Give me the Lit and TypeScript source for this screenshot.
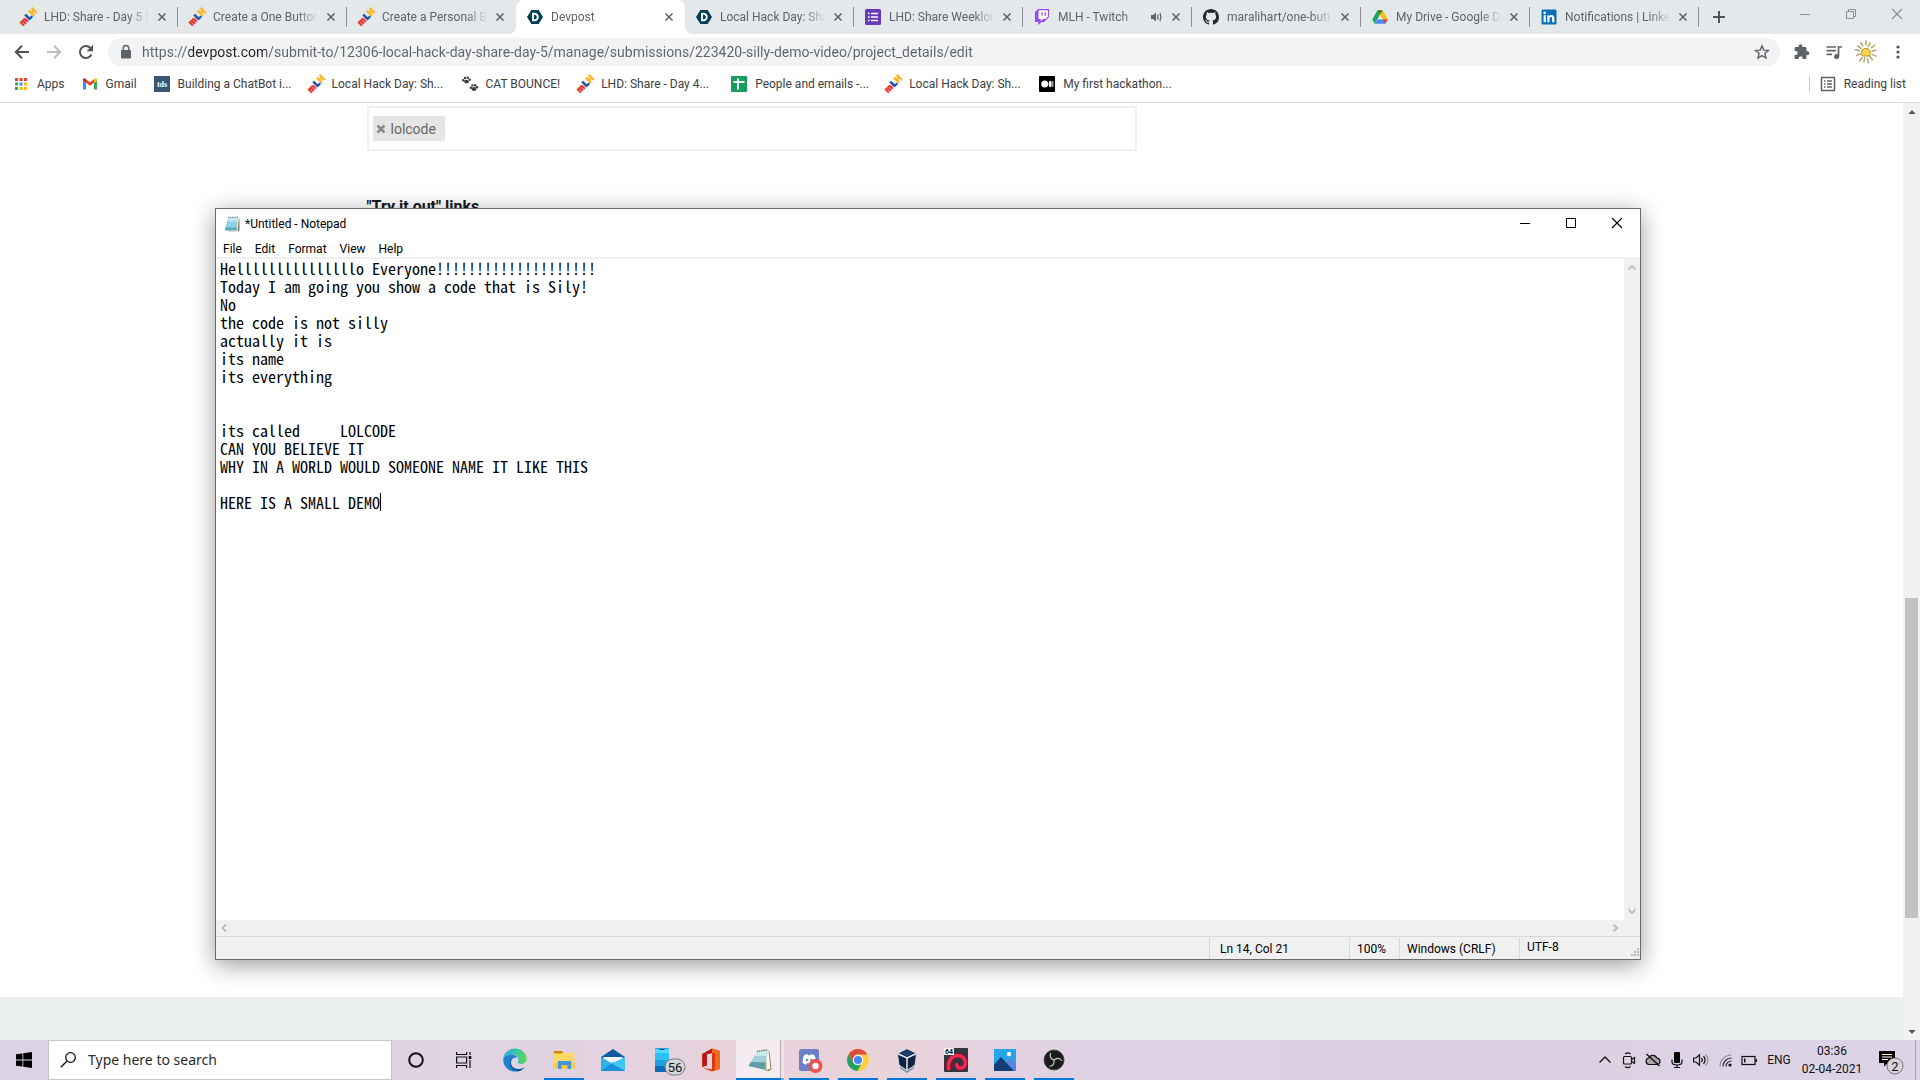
import { LitElement, html, css, svg, nothing, TemplateResult } from "lit";
import { customElement } from "lit/decorators.js";
import { classMap } from "lit/directives/class-map.js";

type Glyph = TemplateResult;

/* ---------- shared drawing helpers ---------- */

const icon = (body: unknown, size = 16, box = 16): Glyph =>
  html`<svg class="icon" width=${size} height=${size} viewBox="0 0 ${box} ${box}" aria-hidden="true">${body}</svg>`;

const mlh = () => icon(svg`
  <g transform="rotate(-45 8 8)" font-family="Roboto, sans-serif" font-weight="900" font-size="9">
    <text x="-2" y="11" fill="#e2362f" stroke="#e2362f" stroke-width=".6">m</text>
    <text x="6.500" y="11" fill="#1d539f" stroke="#1d539f" stroke-width=".8">L</text>
    <text x="12" y="11" fill="#f8b92a" stroke="#f8b92a" stroke-width=".8">H</text>
  </g>`);

const devpost = () => icon(svg`
  <path fill="#003e54" d="M4.400 1h7.200L16 8l-4.400 7H4.400L0 8z"/>
  <path fill="none" stroke="#fff" stroke-width="1.900" d="M6 4.800v6.400h1.600a3.200 3.200 0 0 0 0-6.400z"/>`);

const forms = () => icon(svg`
  <rect width="16" height="16" rx="1.500" fill="#673ab7"/>
  <path stroke="#fff" stroke-width="1.500" d="M3 4.500h1.600M3 8h1.600M3 11.500h1.600M6 4.500h7M6 8h7M6 11.500h7"/>`);

const twitch = () => icon(svg`
  <path fill="#9146ff" d="M4 0 1 3v10h3.500v3l3-3H10l5-5V0z"/>
  <path fill="#fff" d="M4.500 1.200h9.400v6.300L11.500 10H9l-2.200 2.200V10H4.500z"/>
  <path fill="#9146ff" d="M7.400 3.200h1.200v3.500H7.400zM10.600 3.200h1.200v3.500h-1.200z"/>`);

const github = () => icon(svg`
  <path fill="#24292e" d="M8 0C3.580 0 0 3.580 0 8c0 3.540 2.290 6.530 5.470 7.590.4.070.55-.17.55-.38 0-.19-.01-.82-.01-1.490-2.010.37-2.530-.49-2.690-.94-.09-.23-.48-.94-.82-1.130-.28-.15-.68-.52-.01-.53.63-.01 1.080.58 1.230.82.72 1.210 1.870.87 2.330.66.07-.52.28-.87.51-1.070-1.780-.2-3.640-.89-3.640-3.950 0-.87.31-1.590.82-2.150-.08-.2-.36-1.020.08-2.120 0 0 .67-.21 2.200.82.64-.18 1.320-.27 2-.27s1.360.09 2 .27c1.530-1.040 2.200-.82 2.200-.82.44 1.100.16 1.920.08 2.120.51.56.82 1.270.82 2.150 0 3.070-1.870 3.750-3.650 3.950.29.25.54.73.54 1.480 0 1.070-.01 1.930-.01 2.200 0 .21.15.46.55.38A8.010 8.010 0 0 0 16 8c0-4.420-3.580-8-8-8z"/>`);

const drive = () => icon(svg`
  <path fill="#1fa463" d="M5.500 1.300 8 5.600 2.700 14.700.2 10.400z"/>
  <path fill="#ffba00" d="M5.500 1.300h5l5.300 9.100h-5z"/>
  <path fill="#4688f4" d="M5.300 10.400h10.500l-2.500 4.300H2.700z"/>
  <path fill="#ea4335" d="m10.800 10.400 5 0-2.500 4.300z"/>
  <path fill="#188038" d="M5.500 1.300h5L8 5.600z"/>`);

const linkedin = () => icon(svg`
  <rect x=".5" y=".5" width="15" height="15" rx="1.200" fill="#0a6fb4"/>
  <rect x="2.600" y="6.300" width="2.200" height="6.900" fill="#fff"/><circle cx="3.700" cy="3.900" r="1.300" fill="#fff"/>
  <path fill="#fff" d="M6.300 6.300h2.100v1c.4-.7 1.200-1.200 2.200-1.200 2.100 0 2.700 1.400 2.700 3.300v3.800h-2.200V9.800c0-.9-.1-1.900-1.200-1.900-1.200 0-1.400.9-1.400 1.800v3.500H6.300z"/>`);

const apps = () => icon(svg`
  ${[["#ea4335", 2, 2], ["#ea4335", 6.500, 2], ["#ea4335", 11, 2], ["#34a853", 2, 6.500], ["#4285f4", 6.500, 6.500], ["#fbbc04", 11, 6.500],
    ["#34a853", 2, 11], ["#fbbc04", 6.500, 11], ["#fbbc04", 11, 11]].map(
    ([c, x, y]) => svg`<rect x=${x} y=${y} width="3" height="3" fill=${c}/>`)}`);

const gmail = () => icon(svg`
  <path fill="#4285f4" d="M1 13.500V4.500l3 2.300v6.700z"/><path fill="#34a853" d="M12 13.500V6.800l3-2.300v9z"/>
  <path fill="#fbbc04" d="M12 3.200v3.600l3-2.300v-.8c0-1.200-1.300-1.800-2.200-1.100z"/>
  <path fill="#c5221f" d="M1 4.500v-.8c0-1.200 1.300-1.800 2.200-1.100l.8.600v3.600z"/>
  <path fill="#ea4335" d="M4 3.200 8 6.200l4-3v3.600L8 9.800l-4-3z"/>`);

const tds = () => icon(svg`
  <rect width="16" height="16" fill="#355876"/>
  <text x="8" y="11" text-anchor="middle" font-family="Liberation Serif, serif" font-weight="700" font-size="8" fill="#fff">tds</text>`);

const paws = () => icon(svg`
  <g fill="#3d3d3d"><ellipse cx="4.500" cy="5.600" rx="2.400" ry="1.900"/><circle cx="1.300" cy="4.200" r="1.200"/><circle cx="3" cy="1.900" r="1.200"/><circle cx="5.700" cy="1.700" r="1.200"/><circle cx="7.700" cy="3.700" r="1.200"/>
  <ellipse cx="12" cy="13" rx="2.400" ry="1.900"/><circle cx="8.900" cy="11.800" r="1.200"/><circle cx="10.500" cy="9.400" r="1.200"/><circle cx="13.200" cy="9.200" r="1.200"/><circle cx="15" cy="11.300" r="1.200"/></g>`);

const sheets = () => icon(svg`
  <rect width="16" height="16" rx="1" fill="#12a05c"/><path stroke="#fff" stroke-width="1.800" d="M2.500 6h11M7 2.500v11"/>`);

const medium = () => icon(svg`
  <rect width="16" height="16" rx="1" fill="#000"/><circle cx="5.700" cy="8" r="3.500" fill="#fff"/>
  <ellipse cx="11.200" cy="8" rx="1.500" ry="3.300" fill="#fff"/><rect x="13.400" y="5" width=".9" height="6" fill="#fff"/>`);

const cross = (s = 16) => icon(svg`<path stroke="currentColor" stroke-width="1.600" fill="none" d="m4.500 4.500 7 7m0-7-7 7"/>`, s);
const speaker = () => icon(svg`<path fill="#5f6368" d="M3 6v4h2.200L8 12.500v-9L5.200 6z"/><path fill="none" stroke="#5f6368" stroke-width="1.300" d="M9.800 5.500v5M12 4c1 2.400 1 5.600 0 8"/>`);

const winMin = () => icon(svg`<path stroke="currentColor" d="M3 8.500h10"/>`);
const winMax = () => icon(svg`<path stroke="currentColor" fill="none" d="M3.500 3.500h9v9h-9z"/>`);
const winRestore = () => icon(svg`<path stroke="currentColor" fill="none" d="M3.500 5.500h7v7h-7zM5.500 5.500v-2h7v7h-2"/>`);
const winClose = () => icon(svg`<path stroke="currentColor" stroke-width="1.100" d="m3 3 10 10m0-10L3 13"/>`);

const chevron = (d: string) => icon(svg`<path fill="none" stroke="#bcbcbc" stroke-width="1.800" d=${d}/>`);
const triangle = (d: string) => icon(svg`<path fill="#505050" d=${d}/>`);

const notepadIcon = (size: number) => icon(svg`
  <path fill="#8a7a55" d="M8 30.500h20l3-2V5h-3z"/>
  <path fill="#f6f3ea" d="M6 29 27 30 30 4H11z"/>
  <path fill="#8fd0e2" d="M8 3h20.500L25 28.500H1.500z"/>
  <path fill="#bfe9f4" d="M8 3h20.500l-1 8H6z"/><path fill="#5ba9c0" d="M2.800 23h22.900L25 28.500H1.500z"/>
  <path stroke="#68747a" stroke-width="2.200" stroke-dasharray="2 1.500" d="M8.500 2.500h20"/>`, size, 32);

const notepadTask = () => icon(svg`
  <path fill="#8a7a55" d="m17 22.500 4 .5 2.500-2-2-17.500-1.500-1z"/>
  <path fill="#faf7ee" d="m18 3 2.500-.5 2 18-4 2z"/>
  <path fill="#9fd2d8" d="M9 3.500 20 2l-3.500 19.500L.5 18z"/><path fill="#c8e8ea" d="M9 3.500 20 2l-1.200 6L6.500 8z"/>
  <path fill="#5d9ba5" d="m3 14 15 .5-1.500 7L.5 18z"/><path stroke="#5f6b70" stroke-width="1.400" stroke-dasharray="1.200 1" d="m9 3.300 11-1.500"/>`, 24, 24);

/* ---------- page data ---------- */

interface TabItem { title: string; art: () => Glyph; active?: boolean; audio?: boolean; plain?: boolean }

const TABS: TabItem[] = [
  { title: "LHD: Share - Day 5 |", art: mlh },
  { title: "Create a One Button", art: mlh },
  { title: "Create a Personal Bl", art: mlh, plain: true },
  { title: "Devpost", art: devpost, active: true, plain: true },
  { title: "Local Hack Day: Sha", art: devpost },
  { title: "LHD: Share Weeklon", art: forms },
  { title: "MLH - Twitch", art: twitch, audio: true },
  { title: "maralihart/one-butt", art: github },
  { title: "My Drive - Google D", art: drive },
  { title: "Notifications | Linke", art: linkedin },
];

const BOOKMARKS: { title: string; art: () => Glyph; wide?: boolean }[] = [
  { title: "Apps", art: apps },
  { title: "Gmail", art: gmail },
  { title: "Building a ChatBot i...", art: tds, wide: true },
  { title: "Local Hack Day: Sh...", art: mlh, wide: true },
  { title: "CAT BOUNCE!", art: paws },
  { title: "LHD: Share - Day 4...", art: mlh, wide: true },
  { title: "People and emails -...", art: sheets, wide: true },
  { title: "Local Hack Day: Sh...", art: mlh, wide: true },
  { title: "My first hackathon...", art: medium, wide: true },
];

const NOTE = `Helllllllllllllllo Everyone!!!!!!!!!!!!!!!!!!!!
Today I am going you show a code that is Sily!
No
the code is not silly
actually it is
its name
its everything


its called     LOLCODE
CAN YOU BELIEVE IT
WHY IN A WORLD WOULD SOMEONE NAME IT LIKE THIS

HERE IS A SMALL DEMO`;

const URL_TEXT = "https://devpost.com/submit-to/12306-local-hack-day-share-day-5/manage/submissions/223420-silly-demo-video/project_details/edit";

const reset = css`
  * { box-sizing: border-box; }
  button, input, textarea { font: inherit; color: inherit; border: 0; padding: 0; margin: 0; background: none; outline: 0; border-radius: 0; }
  button { display: flex; align-items: center; justify-content: center; }
  a { color: inherit; text-decoration: none; }
  .icon { display: block; flex: none; overflow: visible; }
`;

/* ---------- browser chrome ---------- */

@customElement("browser-chrome")
export class BrowserChrome extends LitElement {
  static styles = [reset, css`
    :host { display: block; font: 12px/16px Roboto, "Noto Sans", sans-serif; color: #5f6368; background: #fff; border-bottom: 1px solid #d9dbde; }
    .strip { display: flex; height: 34px; padding-left: 9px; background: #e4e8eb; }
    .tab { position: relative; flex: 0 1 169px; min-width: 0; display: flex; align-items: center; padding: 0 8px 0 11px; }
    .tab::after { content: ""; position: absolute; right: 0; top: 7px; width: 1px; height: 20px; background: #8c9095; }
    .tab.plain::after { display: none; }
    .tab.active { background: #fff; border-radius: 8px 8px 0 0; }
    .tab.active::before { content: ""; position: absolute; left: -8px; right: -8px; bottom: 0; height: 8px;
      background: radial-gradient(circle at 0 0, transparent 8px, #fff 8px) left / 8px 8px no-repeat,
                  radial-gradient(circle at 100% 0, transparent 8px, #fff 8px) right / 8px 8px no-repeat; }
    .title { flex: 1; min-width: 0; margin-left: 8px; justify-content: flex-start; overflow: hidden; white-space: nowrap;
      -webkit-mask-image: linear-gradient(to left, transparent 4px, #000 26px); mask-image: linear-gradient(to left, transparent 4px, #000 26px); }
    .audio { margin-right: 4px; }
    .newtab { width: 40px; }
    .controls { display: flex; margin-left: auto; height: 28px; color: #8a8d91; }
    .controls button { width: 46px; }
    .toolbar { display: flex; align-items: center; gap: 4px; height: 36px; padding: 0 8px; }
    .tool { width: 28px; height: 28px; }
    .omnibox { flex: 1; min-width: 0; display: flex; align-items: center; gap: 8px; height: 28px; margin: 0 4px; padding: 0 10px; border-radius: 14px; background: #f1f3f4; }
    .url { flex: 1; min-width: 0; height: 20px; font-size: 14px; color: transparent; caret-color: #202124;
      background: linear-gradient(to right, #5f6368 47px, #202124 47px 124px, #5f6368 124px);
      -webkit-background-clip: text; background-clip: text; }
    .marks { display: flex; align-items: center; height: 32px; padding: 0 14px 4px 13px; color: #3c4043; }
    .mark { display: flex; align-items: center; gap: 8px; padding-right: 17px; white-space: nowrap; }
    .mark.wide { width: 154px; padding-right: 0; }
    .reading { gap: 8px; margin-left: auto; padding-left: 10px; border-left: 1px solid #c8cacd; }
  `];

  render() {
    return html`
      <div class="strip">
        ${TABS.map(t => html`
          <div class=${classMap({ tab: true, active: !!t.active, plain: !!t.plain })}>
            ${t.art()}
            <button class="title">${t.title}</button>
            ${t.audio ? html`<button class="audio" aria-label="Mute tab">${speaker()}</button>` : nothing}
            <button aria-label="Close tab">${cross()}</button>
          </div>`)}
        <button class="newtab" aria-label="New tab">${icon(svg`<path stroke="#505458" stroke-width="2" d="M8 2v12M2 8h12"/>`)}</button>
        <div class="controls">
          <button aria-label="Minimize">${winMin()}</button>
          <button aria-label="Restore">${winRestore()}</button>
          <button aria-label="Close">${winClose()}</button>
        </div>
      </div>
      <div class="toolbar">
        <button class="tool" aria-label="Back">${icon(svg`<path fill="none" stroke="#505458" stroke-width="2" d="M15 8H2.500M8 1.800 1.800 8 8 14.200"/>`)}</button>
        <button class="tool" aria-label="Forward">${icon(svg`<path fill="none" stroke="#babcbe" stroke-width="2" d="M1 8h12.500M8 1.800 14.200 8 8 14.200"/>`)}</button>
        <button class="tool" aria-label="Reload">${icon(svg`<path fill="none" stroke="#505458" stroke-width="2" d="M13.400 10.500A6 6 0 1 1 12.400 4"/><path fill="#505458" d="M15 .8v6.400H8.600z"/>`)}</button>
        <div class="omnibox">
          ${icon(svg`<rect x="3" y="6" width="10" height="8.500" rx="1" fill="#5f6368"/><path fill="none" stroke="#5f6368" stroke-width="1.500" d="M5.300 6V4.300a2.700 2.700 0 0 1 5.400 0V6"/>`)}
          <input class="url" type="text" aria-label="Address" .value=${URL_TEXT}>
          <button aria-label="Bookmark this page">${icon(svg`<path fill="none" stroke="#5f6368" stroke-width="1.400" d="m8 1.800 1.800 4.300 4.600.4-3.500 3 1.100 4.500-4-2.400-4 2.400 1.100-4.500-3.500-3 4.600-.4z"/>`)}</button>
        </div>
        <button class="tool" aria-label="Extensions">${icon(svg`<path fill="#5f6368" d="M13.500 7.300h-1V4.500c0-.8-.6-1.400-1.400-1.400H8.400V2.200a1.900 1.900 0 0 0-3.800 0v.9H2C1.200 3.100.6 3.700.6 4.500v2.600h1a2 2 0 0 1 0 4h-1v2.600c0 .8.600 1.400 1.400 1.400h2.700v-1a1.900 1.900 0 0 1 3.900 0v1h2.500c.8 0 1.400-.6 1.400-1.400V11h1a1.850 1.850 0 0 0 0-3.700z"/>`)}</button>
        <button class="tool" aria-label="Media controls">${icon(svg`<path stroke="#5f6368" stroke-width="1.700" d="M.5 3h9.500M.5 6.700h9.500M.5 10.400h5.500"/><path fill="none" stroke="#5f6368" stroke-width="1.700" d="M12.500 12.500V3H16"/><circle cx="10.600" cy="12.400" r="2.500" fill="#5f6368"/>`)}</button>
        <button class="tool" aria-label="Profile">${icon(svg`
          <g stroke="#b5a468" stroke-width="1.500" stroke-linecap="round">${[0, 24, 52, 80, 112, 140, 168, 192, 215, 250, 282, 306, 332].map((a, i) => svg`<path d=${i % 2 ? "M12 2v4" : "M12 1v4"} transform="rotate(${a} 12 12)"/>`)}</g>
          <path fill="#f8d84c" stroke="#b98f2b" d="M8 10 11 8.300l3.700.7 1.800 3-.8 4H8.500L7.500 14z"/>`, 24, 24)}</button>
        <button class="tool" aria-label="Menu">${icon(svg`<g fill="#505458"><circle cx="8" cy="3" r="1.600"/><circle cx="8" cy="8" r="1.600"/><circle cx="8" cy="13" r="1.600"/></g>`)}</button>
      </div>
      <nav class="marks" aria-label="Bookmarks">
        ${BOOKMARKS.map(b => html`<a class=${classMap({ mark: true, wide: !!b.wide })} href="#">${b.art()}<span>${b.title}</span></a>`)}
        <button class="reading">${icon(svg`<rect x="1.500" y="1.500" width="13" height="13" fill="none" stroke="#5f6368" stroke-width="1.500"/><path stroke="#5f6368" stroke-width="1.300" d="M4 5h1.500M4 8h1.500M4 11h1.500M7 5h5M7 8h5M7 11h5"/>`)}<span>Reading list</span></button>
      </nav>`;
  }
}

/* ---------- page under the window ---------- */

@customElement("submission-page")
export class SubmissionPage extends LitElement {
  static styles = [reset, css`
    :host { display: flex; min-height: 0; background: #fff; }
    .page { flex: 1; min-width: 0; display: flex; flex-direction: column; justify-content: space-between; }
    .column { width: 100%; max-width: 1170px; margin: 0 auto; padding-top: 3px; font: 14px/20px Roboto, "Open Sans", sans-serif; color: #666; }
    .tags { display: flex; max-width: 770px; height: 45px; padding: 8px 4px; border: 2px solid #ecf0f1; }
    .tag { display: flex; align-items: center; gap: 6px; padding: 0 9px 0 4px; background: #e5e5e5; }
    .heading { display: block; margin-top: 46px; font: 700 16px/20px Roboto, sans-serif; color: #17191a; }
    .footer { height: 43px; background: #ecf0f1; }
    .scroll { display: flex; flex-direction: column; align-items: stretch; width: 17px; background: #f1f1f1; }
    .scroll button { height: 17px; }
    .before { flex: 478; }
    .thumb { flex: 320; margin: 0 2px; background: #c1c1c1; }
    .after { flex: 105; }
  `];

  render() {
    return html`
      <div class="page">
        <div class="column">
          <div class="tags">
            <span class="tag"><button aria-label="Remove lolcode">${icon(svg`<path stroke="#888" stroke-width="2.500" d="m.5 .5 7 7m0-7-7 7"/>`, 8, 8)}</button>lolcode</span>
          </div>
          <strong class="heading">"Try it out" links</strong>
        </div>
        <div class="footer"></div>
      </div>
      <div class="scroll">
        <button aria-label="Scroll up">${triangle("M4.500 10h7L8 6z")}</button>
        <div class="before"></div><div class="thumb"></div><div class="after"></div>
        <button aria-label="Scroll down">${triangle("M4.500 6h7L8 10z")}</button>
      </div>`;
  }
}

/* ---------- notepad window ---------- */

@customElement("notepad-window")
export class NotepadWindow extends LitElement {
  static styles = [reset, css`
    :host { display: flex; flex-direction: column; font: 12px/16px Roboto, "Noto Sans", sans-serif; color: #000; background: #fff;
      border: 1px solid #6b6b6b; box-shadow: 0 5px 22px rgba(0, 0, 0, .4); }
    .titlebar { display: flex; align-items: center; height: 30px; padding-left: 8px; gap: 5px; }
    .controls { display: flex; align-self: flex-start; margin-left: auto; height: 28px; }
    .controls button { width: 46px; }
    .menu { display: flex; height: 20px; padding: 2px 1px 0; border-bottom: 2px solid #f0f0f0; }
    .menu button { padding: 0 6px; }
    .menu button + button { padding-left: 7px; }
    .body { flex: 1; min-height: 0; display: grid; grid-template: minmax(0, 1fr) 16px / minmax(0, 1fr) 16px; background: #f0f0f0; }
    .sheet { position: relative; background: #fff; font: 16px/18px "Noto Sans Mono CJK SC", "DejaVu Sans Mono", monospace; }
    .text { display: block; width: 100%; height: 100%; padding: 0 4px; resize: none; overflow: hidden; white-space: pre; }
    .caret { position: absolute; left: calc(4px + 20ch); top: calc(13 * 18px); width: 1px; height: 18px; background: #000; }
    .vbar { display: flex; flex-direction: column; justify-content: space-between; }
    .hbar { display: flex; justify-content: space-between; }
    .status { display: grid; grid-template-columns: minmax(0, 1fr) 140px 50px 120px 121px; align-items: stretch; height: 23px; padding-top: 1px; line-height: 23px; background: #f0f0f0; border-top: 1px solid #d7d7d7; }
    .status span { height: 21px; padding-left: 7px; white-space: nowrap; border-left: 1px solid #d7d7d7; }
    .status span:first-child { border-left: 0; }
    .status .place { padding-left: 10px; }
    .status .last { display: flex; justify-content: space-between; align-items: flex-end; }
  `];

  render() {
    return html`
      <div class="titlebar">
        ${notepadIcon(16)}<span>*Untitled - Notepad</span>
        <div class="controls">
          <button aria-label="Minimize">${winMin()}</button>
          <button aria-label="Maximize">${winMax()}</button>
          <button aria-label="Close">${winClose()}</button>
        </div>
      </div>
      <div class="menu">${["File", "Edit", "Format", "View", "Help"].map(m => html`<button>${m}</button>`)}</div>
      <div class="body">
        <div class="sheet">
          <textarea class="text" aria-label="Text editor" spellcheck="false" .value=${NOTE}></textarea>
          <i class="caret"></i>
        </div>
        <div class="vbar">
          <button aria-label="Scroll up">${chevron("m4.500 10.500 3.500-3.500 3.500 3.500")}</button>
          <button aria-label="Scroll down">${chevron("m4.500 5.500 3.500 3.500 3.500-3.500")}</button>
        </div>
        <div class="hbar">
          <button aria-label="Scroll left">${chevron("M10 4.500 6.500 8l3.500 3.500")}</button>
          <button aria-label="Scroll right">${chevron("M5.500 4.500 9 8l-3.500 3.500")}</button>
        </div>
        <div></div>
      </div>
      <div class="status">
        <span></span><span class="place">Ln 14, Col 21</span><span>100%</span><span>Windows (CRLF)</span>
        <span class="last">UTF-8 ${icon(svg`<path fill="#b8b8b8" d="M9 1h2v2H9zM6 4h2v2H6zM9 4h2v2H9zM3 7h2v2H3zM6 7h2v2H6zM9 7h2v2H9z"/>`, 12, 12)}</span>
      </div>`;
  }
}

/* ---------- taskbar ---------- */

const edge = () => icon(svg`
  <defs><linearGradient id="e1" x1="0" y1="0" x2="1" y2="0"><stop offset="0" stop-color="#2aa7dc"/><stop offset=".6" stop-color="#3cc9a4"/><stop offset="1" stop-color="#62d84e"/></linearGradient></defs>
  <path fill="url(#e1)" d="M.3 10.500C1 4.500 6 .5 12 .5c7 0 11.700 5 11.700 10.200 0 3.300-2.600 5.300-5.500 5.300-2.600 0-3.700-1-3.700-1.700s.8-.9.800-2.800C15.300 8.500 12.500 6.600 9 6.600c-4 0-7.300 1.700-8.700 3.900z"/>
  <path fill="#1b82d2" d="M.3 10.500C1.500 8.100 4.600 6.600 8 6.600c3 0 5.200 1.100 6.500 3-4-.5-6.500 1.900-6.500 5.200 0 4.300 3.400 7.900 8 8.100-1.200.4-2.600.6-4 .6C5 23.500-.4 17.500.3 10.500z"/>
  <path fill="#10539f" d="M9.800 10.600c-2.300 1.700-2.600 5-.9 7.300 2.500 3.500 8.300 4.200 12.800 1-1.500 2.500-4 4.100-6.700 4.400-4.500-.3-8-3.700-8-8.200 0-2 1-3.700 2.800-4.500z"/>`, 24, 24);
const folder = () => icon(svg`
  <path fill="#d99a17" d="M2 3h8l1.500 2H2z"/><path fill="#ffd767" d="M1.500 5h21v15.500h-21z"/><path fill="#f9c63d" d="M1.500 15h21v5.500h-21z"/><path fill="#c78b0c" d="M2 3h8v2.500H2z"/>
  <path fill="#3f97d8" d="M6 13h13v8h-3.500v-4h-6v4H6z"/>`, 24, 24);
const mail = () => icon(svg`
  <path fill="#0e5ba5" d="M0 9 12 1l12 8v5H0z"/><path fill="#f4f8fc" d="M2.500 9h19v4L12 19 2.500 13z"/>
  <path fill="#2fb4ea" d="M0 9v14h24V9L12 16z"/><path fill="#1790dd" d="M0 23 12 14l12 9z"/><path fill="#42c6f5" d="M24 9v14L10.500 15.500z"/>`, 24, 24);
const phone = () => icon(svg`
  <rect x="5" width="14" height="24" rx="1" fill="#1fa0e2"/><path fill="#4fdcff" d="M5 1h14v4H5z"/><path fill="#2cc0f3" d="M5 5h14v7H5z"/><path fill="#1268b5" d="M5 18h14v6H5z"/><path stroke="#0c3c66" d="M9.500 1.500h5"/>
  <rect x="15" y="11" width="20" height="16" rx="8" fill="#d3d6da" stroke="#777b80"/>
  <text x="25" y="24" text-anchor="middle" font-family="Roboto, sans-serif" font-size="13" fill="#111">56</text>`, 24, 24);
const office = () => icon(svg`
  <path fill="#dd3a12" d="M13 .5 21 3v18l-8 2.500L4 20l9 1.200V5L8 6.300v11.200L3.300 19V6z"/><path fill="#f26b1d" d="M13 .5 21 3v18l-5 1.500V4.500L13 5z"/><path fill="#b21d1a" d="M13 .5 3.300 6v13L8 17.500V6.300L13 5z"/>`, 24, 24);
const discord = () => icon(svg`
  <g transform="translate(2 1)"><rect x="0" y="0" width="20" height="22" rx="2.500" fill="#6c7fc4"/>
  <path fill="#fff" d="M3.500 14c0-4 1-7 2-8l3-.9.7 1.100h2.100L12 5.100l3 .9c1 1 2 4 2 8l-3.200 1.700-1-1.500H8l-1 1.500z"/><circle cx="8" cy="11" r="1.300" fill="#6c7fc4"/><circle cx="12.500" cy="11" r="1.300" fill="#6c7fc4"/>
  <circle cx="16.500" cy="17" r="7" fill="#f05050"/><circle cx="16.500" cy="17" r="3.200" fill="#fff"/></g>`, 24, 24);
const chrome = () => icon(svg`
  <circle cx="12" cy="12" r="11" fill="#ffcd42"/>
  <path fill="#dc4b3e" d="M2.500 6.500A11 11 0 0 1 21.500 6.500H12A5.500 5.500 0 0 0 7 9.700z"/><path fill="#dc4b3e" d="M2.500 6.500 7.300 14.800 8 8z"/>
  <path fill="#1ea362" d="M2.500 6.500A11 11 0 0 0 11.500 23l4.700-8.200a5.500 5.500 0 0 1-9 0z"/>
  <circle cx="12" cy="12" r="5.200" fill="#fff"/><circle cx="12" cy="12" r="4.100" fill="#4587f4"/>`, 24, 24);
const vbox = () => icon(svg`
  <path fill="#8d99a8" d="m5 18 7 5 7-5v2.500l-7 4.500-7-4.500z"/><path fill="#10243f" stroke="#d9e3ee" stroke-width=".8" d="M12 .8 21.500 5.500 20 17l-8 5.500L4 17 2.500 5.500z"/>
  <path fill="none" stroke="#e8eff6" stroke-width="1.500" d="M3 5.700 12 10l9-4.300M12 10v12"/><path fill="#1d3f6b" d="M6 5.500 12 2.500l6 3-6 2.700z"/>`, 24, 24);
const debian = () => icon(svg`
  <rect width="24" height="24" rx="1" fill="#34363e"/>
  <path fill="none" stroke="#8f0d2e" stroke-width="5" d="M5 22c-2-7 2-14.500 8.500-14.500 5 0 8 3.500 8 7.300 0 3.600-3 5.800-6 5.200-2.600-.5-3.600-3-2-4.700"/>
  <path fill="none" stroke="#ee2c54" stroke-width="3.400" d="M5 22c-2-7 2-14.500 8.500-14.500 5 0 8 3.500 8 7.300 0 3.600-3 5.800-6 5.200-2.600-.5-3.600-3-2-4.700"/>
  <rect x="0" y="0" width="10" height="7" fill="#f5f5f5"/><text x="5" y="6" text-anchor="middle" font-family="Roboto, sans-serif" font-weight="700" font-size="7" fill="#111">64</text>`, 24, 24);
const photos = () => icon(svg`
  <rect x="1" y="1" width="22" height="22" fill="#27a5ea"/><path fill="#5784dc" d="M12 15l5-5 6 6v7H12z"/><path fill="#123d78" d="M1 16.500 8 9l13 14H1z"/><circle cx="16" cy="6" r="2.200" fill="#fff"/>`, 24, 24);
const obs = () => icon(svg`
  <circle cx="12" cy="12" r="10" fill="#1b1a1d" stroke="#4a494d"/>
  <g fill="none" stroke="#c9c8cb" stroke-width="1.200">${[0, 120, 240].map(a => svg`<path d="M12 12C8.500 11 7.200 8 8.800 5" transform="rotate(${a} 12 12)"/>`)}</g>`, 24, 24);

const TASKS: { name: string; art: () => Glyph; open?: boolean; current?: boolean }[] = [
  { name: "Microsoft Edge", art: edge },
  { name: "File Explorer", art: folder, open: true },
  { name: "Mail", art: mail },
  { name: "Your Phone", art: phone },
  { name: "Office", art: office },
  { name: "Notepad", art: notepadTask, open: true, current: true },
  { name: "Discord", art: discord, open: true },
  { name: "Google Chrome", art: chrome, open: true },
  { name: "VirtualBox", art: vbox, open: true },
  { name: "Debian", art: debian, open: true },
  { name: "Photos", art: photos, open: true },
  { name: "OBS Studio", art: obs, open: true },
];

const TRAY: { name: string; art: Glyph }[] = [
  { name: "Show hidden icons", art: icon(svg`<path fill="none" stroke="#111" stroke-width="1.300" d="m2.500 10.500 5.500-5.500 5.500 5.500"/>`) },
  { name: "Meet Now", art: icon(svg`<g fill="none" stroke="#111" stroke-width="1.200"><rect x="2.500" y="4.500" width="8" height="7.500" rx="1"/><path d="m10.500 7.500 3-2v6l-3-2M4 2c1.500-1.200 4-1.200 5.500 0M4 14.500c1.500 1.200 4 1.200 5.500 0"/></g>`) },
  { name: "OneDrive", art: icon(svg`<path fill="#aaa7ae" stroke="#111" stroke-width="1.200" d="M4 12.500a3.300 3.300 0 0 1-.3-6.500 4.500 4.500 0 0 1 8.300.2 3.200 3.200 0 0 1 .5 6.300z"/><path stroke="#111" stroke-width="1.400" d="m1.500 2 13 12"/>`) },
  { name: "Microphone", art: icon(svg`<rect x="5" y="0" width="6" height="11" rx="1" fill="#000"/><path fill="none" stroke="#111" stroke-width="1.200" d="M3 7.500V10c0 2 1.500 3 5 3s5-1 5-3V7.500M8 13v2.500M5 15.500h6"/>`) },
  { name: "Volume", art: icon(svg`<g fill="none" stroke="#111" stroke-width="1.200"><path d="M.6 6v4h2.400l3.500 3.200V2.800L3 6zM8.500 6c1 1.200 1 2.800 0 4M10.500 4.200c2 2.300 2 5.300 0 7.600"/><path stroke="#8a868e" d="M12.700 2.500c3 3.300 3 7.700 0 11"/></g>`) },
  { name: "Network", art: icon(svg`<g fill="none" stroke="#8b8790" stroke-width="1.200"><path d="M3 14.500A11.500 11.500 0 0 1 14.500 3"/><path stroke="#222" d="M6 14.500A8.500 8.500 0 0 1 14.500 6M9 14.500A5.500 5.500 0 0 1 14.500 9"/></g><circle cx="13" cy="13" r="1.600" fill="#111"/>`) },
  { name: "Battery", art: icon(svg`<rect x="1" y="4.500" width="13" height="8" fill="none" stroke="#111" stroke-width="1.200"/><path fill="#111" d="M14.500 7H16v3h-1.500zM3 6.500h1.500v4H3z"/>`) },
];

@customElement("task-bar")
export class TaskBar extends LitElement {
  static styles = [reset, css`
    :host { display: flex; height: 40px; font: 12px/16px Roboto, "Noto Sans", sans-serif; color: #111;
      background: linear-gradient(to right, #dbd4e5, #e0d2e1 28%, #e9d2db 39%, #e9d2da 46%, #dfd1e3 56%, #decfe2 82%, #dcd3e6 90%, #dcd3e6); }
    .start { width: 48px; }
    .search { flex: 0 1 344px; min-width: 0; display: flex; align-items: center; gap: 12px; padding: 0 11px; background: #fff; border: 1px solid #c6c6c8; }
    .query { flex: 1; min-width: 0; font: 14px/20px "Noto Sans", sans-serif; }
    .query::placeholder { color: #2b2b2b; opacity: 1; }
    .system { width: 48px; }
    .tasks { display: flex; gap: 1px; padding-left: 3px; }
    .task { position: relative; width: 48px; }
    .task.open::after { content: ""; position: absolute; left: 4px; right: 4px; bottom: 0; height: 2px; background: #0078d7; }
    .task.current { background: linear-gradient(to right, #f4ecf1 44px, #b9aeb8 44px 45px, #f2e3e9 45px); }
    .task.current::after { left: 0; right: 0; background: linear-gradient(to right, #0078d7 45px, #6aaee6 45px); }
    .tray { display: flex; margin-left: auto; }
    .tray button { width: 24px; }
    .tray .lang { width: 36px; }
    .tray .clock { flex-direction: column; gap: 2px; width: 70px; }
    .tray .notes { width: 48px; }
    .tray .desk { width: 5px; border-left: 1px solid #a9a2b2; }
  `];

  render() {
    return html`
      <button class="start" aria-label="Start">${icon(svg`<path fill="#000" d="M0 2.300 6.500 1.400v6.200H0zM7.300 1.300 16 0v7.600H7.300zM0 8.400h6.500v6.200L0 13.700zM7.300 8.400H16V16l-8.700-1.200z"/>`)}</button>
      <label class="search">
        ${icon(svg`<g fill="none" stroke="#111" stroke-width="1.300"><circle cx="10.500" cy="5.500" r="4.800"/><path d="M7 9 .8 15.200"/></g>`)}
        <input class="query" type="text" placeholder="Type here to search" aria-label="Type here to search">
      </label>
      <button class="system" aria-label="Cortana">${icon(svg`<circle cx="8" cy="8" r="6.800" fill="none" stroke="#111" stroke-width="2"/>`)}</button>
      <button class="system" aria-label="Task View">${icon(svg`<path fill="none" stroke="#111" stroke-width="1.200" d="M.6 0v2.500h10V0M.6 5h10v6h-10zM.6 16v-2.500h10V16M14 0v3M14 8v8"/><path fill="#111" d="M12.700 4h2.600v3h-2.600z"/>`)}</button>
      <div class="tasks">
        ${TASKS.map(t => html`<button class=${classMap({ task: true, open: !!t.open, current: !!t.current })} aria-label=${t.name}>${t.art()}</button>`)}
      </div>
      <div class="tray">
        ${TRAY.map(t => html`<button aria-label=${t.name}>${t.art}</button>`)}
        <button class="lang">ENG</button>
        <button class="clock"><span>03:36</span><span>02-04-2021</span></button>
        <button class="notes" aria-label="Notifications">${icon(svg`
          <path fill="#000" d="M0 3h16v12H9l-4 3.500V15H0z"/><path stroke="#fff" stroke-width="1.200" d="M3 6.500h10M3 9h10M3 11.500h6"/>
          <circle cx="16" cy="18" r="8" fill="#d6d4da" stroke="#77747c"/><text x="16" y="23" text-anchor="middle" font-family="Roboto, sans-serif" font-size="13" fill="#111">2</text>`, 24, 24)}</button>
        <button class="desk" aria-label="Show desktop"></button>
      </div>`;
  }
}

@customElement("app-root")
export class AppRoot extends LitElement {
  static styles = css`
    :host { position: relative; display: grid; grid-template-rows: auto minmax(0, 1fr) auto; height: 100vh; overflow: hidden; }
    .note { position: absolute; inset: 208px 279px 120px 215px; }
  `;

  render() {
    return html`
      <browser-chrome></browser-chrome>
      <submission-page></submission-page>
      <task-bar></task-bar>
      <notepad-window class="note"></notepad-window>`;
  }
}
